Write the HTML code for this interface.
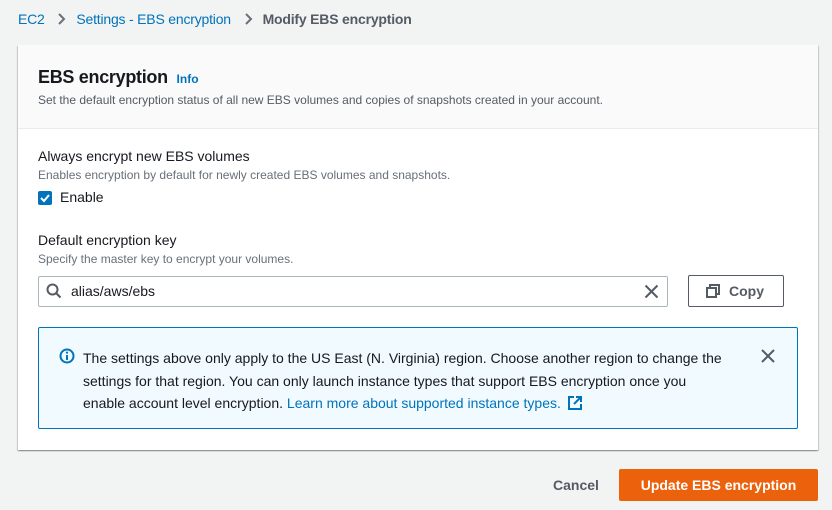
<!DOCTYPE html>
<html><head><style>
*{box-sizing:border-box;margin:0;padding:0}
body{width:832px;height:510px;background:#f2f3f3;font-family:"Liberation Sans",sans-serif;color:#16191f;position:relative;overflow:hidden}
.a{position:absolute;white-space:nowrap}
.link{color:#0073bb}
</style></head><body>
<div class="a" style="left:18px;top:10px;font-size:14px;line-height:18px;letter-spacing:-0.2px"><span class="link">EC2</span>
<svg width="10" height="12" style="margin:0 9px -1px 9px" viewBox="0 0 10 12"><path d="M2 1l5 5-5 5" fill="none" stroke="#687078" stroke-width="2"/></svg><span class="link">Settings - EBS encryption</span>
<svg width="10" height="12" style="margin:0 9px -1px 9px" viewBox="0 0 10 12"><path d="M2 1l5 5-5 5" fill="none" stroke="#687078" stroke-width="2"/></svg><b style="color:#545b64">Modify EBS encryption</b></div>

<div class="a" style="left:18px;top:45px;width:800px;height:405px;background:#fff;box-shadow:0 1px 1px 0 rgba(0,28,36,.3),1px 1px 1px 0 rgba(0,28,36,.15),-1px 1px 1px 0 rgba(0,28,36,.15)">
<div style="height:84px;background:#fafafa;border-bottom:1px solid #eaeded"></div>
</div>
<div class="a" style="left:38px;top:66px;font-size:18px;font-weight:bold;line-height:22px;letter-spacing:-0.3px">EBS encryption <span class="link" style="font-size:12px;margin-left:4px;letter-spacing:0">Info</span></div>
<div class="a" style="left:38px;top:93px;font-size:12px;color:#545b64">Set the default encryption status of all new EBS volumes and copies of snapshots created in your account.</div>

<div class="a" style="left:38px;top:148px;font-size:14px">Always encrypt new EBS volumes</div>
<div class="a" style="left:38px;top:168px;font-size:12px;color:#687078">Enables encryption by default for newly created EBS volumes and snapshots.</div>
<div class="a" style="left:38px;top:191px;width:14px;height:14px;background:#0073bb;border-radius:2px"><svg width="14" height="14" viewBox="0 0 14 14"><path d="M3 7l3 3 5-6" fill="none" stroke="#fff" stroke-width="2"/></svg></div>
<div class="a" style="left:60px;top:189px;font-size:14px">Enable</div>

<div class="a" style="left:38px;top:232px;font-size:14px">Default encryption key</div>
<div class="a" style="left:38px;top:252px;font-size:12px;color:#687078">Specify the master key to encrypt your volumes.</div>
<div class="a" style="left:38px;top:276px;width:630px;height:31px;border:1px solid #aab7b8;border-radius:2px"></div>
<svg class="a" style="left:46px;top:283px" width="16" height="16" viewBox="0 0 16 16"><circle cx="6.5" cy="6.5" r="5" fill="none" stroke="#545b64" stroke-width="2"/><path d="M10 10l4.5 4.5" stroke="#545b64" stroke-width="2"/></svg>
<div class="a" style="left:71px;top:283px;font-size:14px">alias/aws/ebs</div>
<svg class="a" style="left:644px;top:284px" width="15" height="15" viewBox="0 0 15 15"><path d="M1.5 1.5l12 12M13.5 1.5l-12 12" stroke="#545b64" stroke-width="2"/></svg>
<div class="a" style="left:688px;top:275px;width:96px;height:32px;border:1px solid #545b64;border-radius:2px;background:#fff"></div>
<svg class="a" style="left:706px;top:284px" width="14" height="14" viewBox="0 0 14 14"><rect x="1" y="4" width="9" height="9" fill="none" stroke="#545b64" stroke-width="2"/><path d="M4 4V1h9v9h-3" fill="none" stroke="#545b64" stroke-width="2"/></svg>
<div class="a" style="left:729px;top:283px;font-size:14px;font-weight:bold;color:#545b64">Copy</div>

<div class="a" style="left:38px;top:327px;width:760px;height:102px;background:#f1faff;border:1px solid #0073bb;border-radius:2px"></div>
<svg class="a" style="left:59px;top:348px" width="16" height="16" viewBox="0 0 16 16"><circle cx="8" cy="8" r="6.5" fill="none" stroke="#0073bb" stroke-width="2"/><path d="M8 7v5" stroke="#0073bb" stroke-width="2"/><circle cx="8" cy="4.6" r="1.1" fill="#0073bb"/></svg>
<div class="a" style="left:83px;top:347px;font-size:14px;line-height:22.5px">The settings above only apply to the US East (N. Virginia) region. Choose another region to change the<br>settings for that region. You can only launch instance types that support EBS encryption once you<br>enable account level encryption. <span class="link">Learn more about supported instance types.</span>
<svg width="14" height="14" viewBox="0 0 14 14" style="margin-left:3px;margin-bottom:-2px"><path d="M6 1H1v12h12V8M8 1h5v5M13 1L6 8" fill="none" stroke="#0073bb" stroke-width="2"/></svg></div>
<svg class="a" style="left:761px;top:349px" width="14" height="14" viewBox="0 0 14 14"><path d="M1 1l12 12M13 1L1 13" stroke="#545b64" stroke-width="2"/></svg>

<div class="a" style="left:553px;top:477px;font-size:14px;font-weight:bold;color:#545b64">Cancel</div>
<div class="a" style="left:619px;top:469px;width:199px;height:32px;background:#ec620c;border-radius:2px;color:#fff;font-size:14px;font-weight:bold;text-align:center;line-height:32px">Update EBS encryption</div>
</body></html>
